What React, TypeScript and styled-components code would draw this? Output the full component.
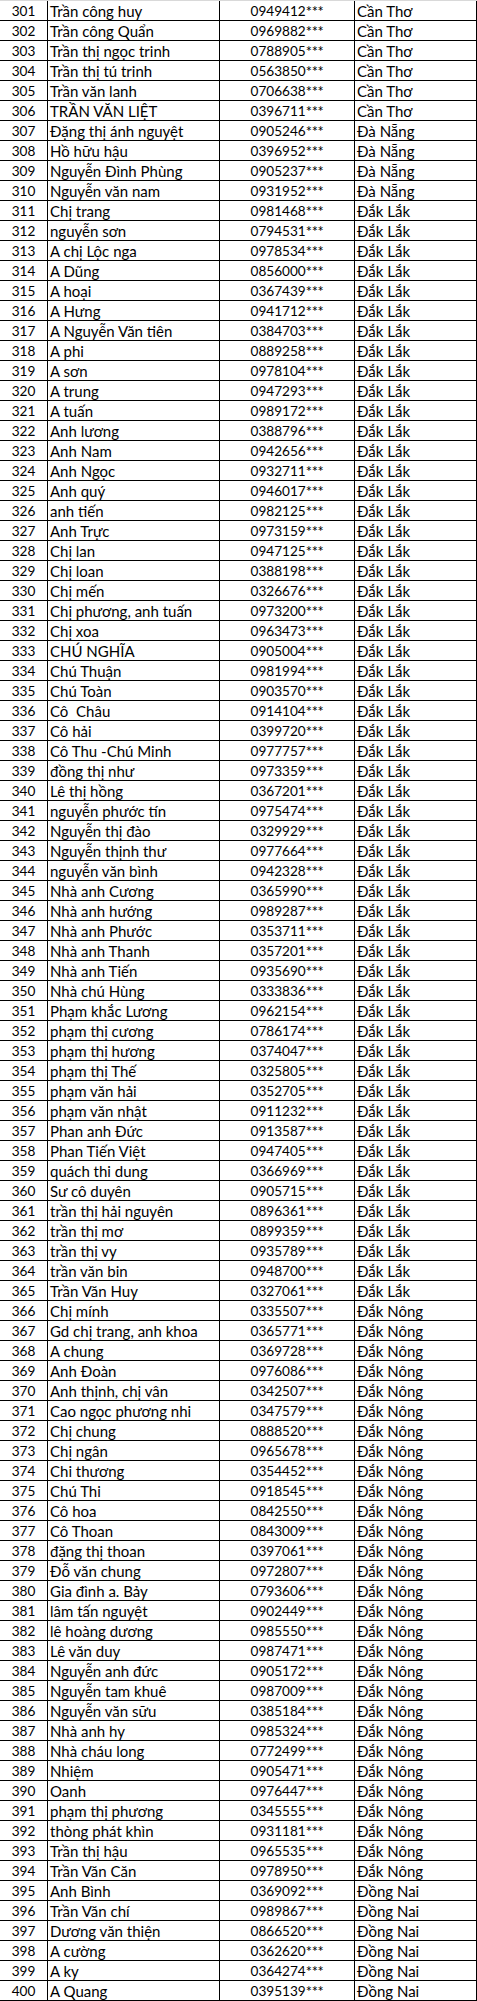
import React from 'react';
import styled, { createGlobalStyle } from 'styled-components';

type Entry = [string, string];

// [name, phone prefix] grouped by province, numbering starts at 301
const groups: { province: string; rows: Entry[] }[] = [
  {
    province: 'Cần Thơ',
    rows: [
      ['Trần công huy', '0949412'],
      ['Trần công Quẩn', '0969882'],
      ['Trần thị ngọc trinh', '0788905'],
      ['Trần thị tú trinh', '0563850'],
      ['Trần văn lanh', '0706638'],
      ['TRẦN VĂN LIỆT', '0396711'],
    ],
  },
  {
    province: 'Đà Nẵng',
    rows: [
      ['Đặng thị ánh nguyệt', '0905246'],
      ['Hồ hữu hậu', '0396952'],
      ['Nguyễn Đình Phùng', '0905237'],
      ['Nguyễn văn nam', '0931952'],
    ],
  },
  {
    province: 'Đắk Lắk',
    rows: [
      ['Chị trang', '0981468'],
      ['nguyễn sơn', '0794531'],
      ['A chị Lộc nga', '0978534'],
      ['A Dũng', '0856000'],
      ['A hoại', '0367439'],
      ['A Hưng', '0941712'],
      ['A Nguyễn Văn tiên', '0384703'],
      ['A phi', '0889258'],
      ['A sơn', '0978104'],
      ['A trung', '0947293'],
      ['A tuấn', '0989172'],
      ['Anh lương', '0388796'],
      ['Anh Nam', '0942656'],
      ['Anh Ngọc', '0932711'],
      ['Anh quý', '0946017'],
      ['anh tiến', '0982125'],
      ['Anh Trực', '0973159'],
      ['Chị lan', '0947125'],
      ['Chị loan', '0388198'],
      ['Chị mến', '0326676'],
      ['Chị phương, anh tuấn', '0973200'],
      ['Chị xoa', '0963473'],
      ['CHÚ NGHĨA', '0905004'],
      ['Chú Thuận', '0981994'],
      ['Chú Toàn', '0903570'],
      ['Cô  Châu', '0914104'],
      ['Cô hải', '0399720'],
      ['Cô Thu -Chú Minh', '0977757'],
      ['đồng thị như', '0973359'],
      ['Lê thị hồng', '0367201'],
      ['nguyễn phước tín', '0975474'],
      ['Nguyễn thị đào', '0329929'],
      ['Nguyễn thịnh thư', '0977664'],
      ['nguyễn văn bình', '0942328'],
      ['Nhà anh Cương', '0365990'],
      ['Nhà anh hướng', '0989287'],
      ['Nhà anh Phước', '0353711'],
      ['Nhà anh Thanh', '0357201'],
      ['Nhà anh Tiến', '0935690'],
      ['Nhà chú Hùng', '0333836'],
      ['Phạm khắc Lương', '0962154'],
      ['phạm thị cương', '0786174'],
      ['phạm thị hương', '0374047'],
      ['phạm thị Thế', '0325805'],
      ['phạm văn hải', '0352705'],
      ['phạm văn nhật', '0911232'],
      ['Phan anh Đức', '0913587'],
      ['Phan Tiến Việt', '0947405'],
      ['quách thi dung', '0366969'],
      ['Sư cô duyên', '0905715'],
      ['trần thị hải nguyên', '0896361'],
      ['trần thị mơ', '0899359'],
      ['trần thị vy', '0935789'],
      ['trần văn bin', '0948700'],
      ['Trần Văn Huy', '0327061'],
    ],
  },
  {
    province: 'Đắk Nông',
    rows: [
      ['Chị mính', '0335507'],
      ['Gd chị trang, anh khoa', '0365771'],
      ['A chung', '0369728'],
      ['Anh Đoàn', '0976086'],
      ['Anh thịnh, chị vân', '0342507'],
      ['Cao ngọc phương nhi', '0347579'],
      ['Chị chung', '0888520'],
      ['Chị ngân', '0965678'],
      ['Chi thương', '0354452'],
      ['Chú Thi', '0918545'],
      ['Cô hoa', '0842550'],
      ['Cô Thoan', '0843009'],
      ['đặng thị thoan', '0397061'],
      ['Đỗ văn chung', '0972807'],
      ['Gia đình a. Bảy', '0793606'],
      ['lâm tấn nguyệt', '0902449'],
      ['lê hoàng dương', '0985550'],
      ['Lê văn duy', '0987471'],
      ['Nguyễn anh đức', '0905172'],
      ['Nguyễn tam khuê', '0987009'],
      ['Nguyễn văn sữu', '0385184'],
      ['Nhà anh hy', '0985324'],
      ['Nhà cháu long', '0772499'],
      ['Nhiệm', '0905471'],
      ['Oanh', '0976447'],
      ['phạm thị phương', '0345555'],
      ['thòng phát khìn', '0931181'],
      ['Trần thị hậu', '0965535'],
      ['Trần Văn Căn', '0978950'],
    ],
  },
  {
    province: 'Đồng Nai',
    rows: [
      ['Anh Bình', '0369092'],
      ['Trần Văn chí', '0989867'],
      ['Dương văn thiện', '0866520'],
      ['A cường', '0362620'],
      ['A ky', '0364274'],
      ['A Quang', '0395139'],
    ],
  },
];

const rows = groups.flatMap((g) =>
  g.rows.map(([name, phone]) => ({ name, phone, province: g.province }))
);

const GlobalStyle = createGlobalStyle`
  html, body {
    margin: 0;
    padding: 0;
    background: #ffffff;
  }
`;

const App: React.FC = () => {
  return (
    <>
      <GlobalStyle />
      <Sheet>
        {rows.map((r, i) => (
          <Row key={i}>
            <FigureCell>{301 + i}</FigureCell>
            <Cell>{r.name}</Cell>
            <FigureCell>
              {r.phone}
              <Stars>***</Stars>
            </FigureCell>
            <Cell>{r.province}</Cell>
          </Row>
        ))}
      </Sheet>
    </>
  );
};

const Sheet = styled.div`
  width: 477px;
  border-top: 1px solid #d9d9d9;
  font-family: Lato, 'Open Sans', sans-serif;
  color: #000000;
`;

const Row = styled.div`
  display: grid;
  grid-template-columns: 48px 172px 135px 122px;
  height: 20px;
  box-sizing: border-box;
  border-bottom: 1px solid #000000;
`;

const Cell = styled.div`
  display: flex;
  align-items: flex-end;
  justify-content: flex-start;
  padding-left: 2px;
  box-sizing: border-box;
  border-right: 1px solid #000000;
  font-size: 15px;
  line-height: 17px;
  white-space: pre;
  overflow: hidden;
`;

/* numbers: centred, Lato digits run wide so a touch smaller */
const FigureCell = styled(Cell)`
  justify-content: center;
  padding-left: 0;
  font-size: 13.6px;
`;

const Stars = styled.span`
  font-size: 14.6px;
  letter-spacing: -0.3px;
`;

export default App;
